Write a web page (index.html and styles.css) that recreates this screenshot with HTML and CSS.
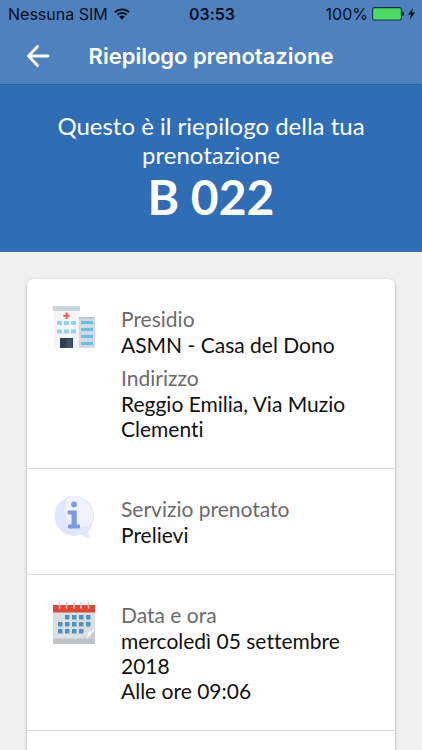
FILE: index.html
```html
<!DOCTYPE html>
<html lang="it">
<head>
<meta charset="utf-8">
<meta name="viewport" content="width=device-width, initial-scale=1">
<title>Riepilogo prenotazione</title>
<link rel="stylesheet" href="styles.css">
</head>
<body>
<header class="top">
  <div class="status">
    <div class="carrier">
      <span>Nessuna SIM</span>
      <svg class="wifi" viewBox="0 0 16 12" aria-hidden="true">
        <path d="M1 4.2a10 10 0 0 1 14 0M3.4 6.8a6.5 6.5 0 0 1 9.2 0" fill="none" stroke="currentColor" stroke-width="1.9"/>
        <path d="M5.2 8.8a4 4 0 0 1 5.6 0L8 11.7z" fill="currentColor"/>
      </svg>
    </div>
    <time class="clock">03:53</time>
    <div class="power">
      <span>100%</span>
      <svg class="battery" viewBox="0 0 44 14" aria-hidden="true">
        <rect x=".6" y=".6" width="28.8" height="12.4" rx="1.8" fill="#4cd964" stroke="#16324f" stroke-width="1.1"/>
        <path d="M30.5 4.5c2 .4 2 4.300 0 4.700z" fill="#06101c"/>
        <path d="M41 1l-5 6.600h3L37.700 12.500l5.400-6.900h-3.200z" fill="#06101c"/>
      </svg>
    </div>
  </div>
  <nav class="bar">
    <button class="back" type="button" aria-label="Indietro">
      <svg viewBox="0 0 24 22" aria-hidden="true"><path d="M11.500 1.500L2.500 11l9 9.500M2.500 11H22" fill="none" stroke="currentColor" stroke-width="2.800" stroke-linejoin="round" stroke-linecap="round"/></svg>
    </button>
    <h1 class="title">Riepilogo prenotazione</h1>
  </nav>
</header>
<main class="content">
  <section class="hero">
    <p class="intro">Questo è il riepilogo della tua prenotazione</p>
    <strong class="code">B 022</strong>
  </section>
  <section class="card">
    <div class="row">
      <svg class="icon" viewBox="0 0 42 42" aria-hidden="true">
        <path d="M1 3h25v39H1z" fill="#f3f4f6"/>
        <path d="M0 0h27v5H0z" fill="#cdd3dc"/>
        <path d="M26 11h16v31H26z" fill="#d3d9e2"/>
        <path d="M26 11h16v2H26z" fill="#bdc7d3"/>
        <path d="M12.500 6.500h2v2.200h2.200v2h-2.200V13h-2v-2.300h-2.200v-2h2.200z" fill="#f2624b"/>
        <path d="M4 15h5v4H4zM11 15h5v4h-5zM18 15h5v4h-5zM4 23.500h5v4H4zM11 23.500h5v4h-5zM18 23.500h5v4h-5z" fill="#8fd3f3"/>
        <path d="M28 15h12v3H28zM28 22h12v3H28zM28 29h12v3H28zM28 36h12v3H28z" fill="#67bfe6"/>
        <path d="M7 32h13v10H7z" fill="#2d3f52"/><path d="M13.500 33H19v9h-5.500z" fill="#405268"/>
      </svg>
      <dl class="details">
        <div class="group"><dt>Presidio</dt><dd>ASMN - Casa del Dono</dd></div>
        <div class="group"><dt>Indirizzo</dt><dd>Reggio Emilia, Via Muzio Clementi</dd></div>
      </dl>
    </div>
    <div class="row">
      <svg class="icon" viewBox="0 0 42 42" aria-hidden="true">
        <path d="M20.500 0a20 20 0 1 0 8.500 38.500c2 2.500 4.500 3.500 6.800 3.300.8-.1 1-.8.600-1.400-1-1.800-1.300-3.600-.9-6.100A20.200 20.200 0 0 0 20.500 0z" fill="#dfe6fd"/>
        <path d="M20.500 0c-6 2-9 7-8.500 13.500C12.500 23 19.500 31 28.500 31c4.500 0 8-1.500 10.500-4.500A20.200 20.200 0 0 0 20.500 0z" fill="#f0f3ff"/>
        <circle cx="21" cy="8.500" r="2.900" fill="#7b9be0"/>
        <path d="M15.500 14.500h8.300v14h2.200q1 0 1 1v2q0 1-1 1H16q-1 0-1-1v-2q0-1 1-1h2.500v-10h-3q-1 0-1-1v-2q0-1 1-1z" fill="#7b9be0"/>
      </svg>
      <dl class="details">
        <div class="group"><dt>Servizio prenotato</dt><dd>Prelievi</dd></div>
      </dl>
    </div>
    <div class="row">
      <svg class="icon" viewBox="0 0 42 42" aria-hidden="true">
        <path d="M0 9h42v33H0z" fill="#dcdfe1"/><path d="M0 36.500h42V42H0z" fill="#bfc3c6"/>
        <path d="M0 3h42v7.500H0z" fill="#dc4938"/>
        <path d="M6.500 0v6M13.500 0v6M21 0v6M28 0v6M35.500 0v6" stroke="#e2c7c5" stroke-width="1.500" stroke-linecap="round"/>
        <path d="M12 13h4.500v4.500H12zM19 13h4.500v4.500H19zM26 13h4.500v4.500H26zM33 13h4.500v4.500H33zM5 20h4.500v4.500H5zM12 20h4.500v4.500H12zM19 20h4.500v4.500H19zM26 20h4.500v4.500H26zM33 20h4.500v4.500H33zM5 27h4.500v4.500H5zM12 27h4.500v4.500H12zM19 27h4.500v4.500H19zM26 27h4.500v4.500H26z" fill="#4c92c4"/>
        <path d="M42 28v8.500h-8z" fill="#c9cdd0"/><path d="M34 36.500l1-6 7-2.500z" fill="#fafbfc"/>
      </svg>
      <dl class="details">
        <div class="group"><dt>Data e ora</dt><dd>mercoledì 05 settembre 2018</dd><dd>Alle ore 09:06</dd></div>
      </dl>
    </div>
    <div class="row"></div>
  </section>
</main>
</body>
</html>
```
FILE: styles.css
```css
* {
  box-sizing: border-box;
}

body {
  display: flex;
  flex-direction: column;
  height: 100vh;
  margin: 0;
  background: #efefef;
  color: #111;
  font-family: Lato, sans-serif;
  font-variant-ligatures: none;
}

.top {
  flex: none;
  background: #4e81bd;
  border-bottom: 1px solid #2c66a5;
  font-family: Inter, sans-serif;
}

.status {
  display: grid;
  grid-template-columns: 1fr auto 1fr;
  align-items: center;
  height: 28px;
  padding: 0 6px 0 8px;
  color: #06101c;
  font-size: 16px;
  line-height: 20px;
}

.carrier,
.power {
  display: flex;
  align-items: center;
  gap: 6px;
}

.power {
  justify-content: flex-end;
  gap: 4px;
}

.wifi {
  width: 16px;
  height: 12px;
}

.battery {
  width: 44px;
  height: 14px;
}

.clock {
  font-weight: 600;
}

.bar {
  display: grid;
  grid-template-columns: 44px 1fr 44px;
  align-items: center;
  height: 56px;
  padding: 0 16px;
  color: #fff;
}

.back {
  display: flex;
  align-items: center;
  height: 44px;
  padding: 0 10px;
  border: 0;
  background: none;
  color: inherit;
}

.back svg {
  width: 24px;
  height: 22px;
}

.title {
  margin: 0;
  font-size: 22px;
  font-weight: 600;
  line-height: 28px;
  text-align: center;
  white-space: nowrap;
}

.content {
  flex: 1;
  min-height: 0;
  overflow-y: auto;
  scrollbar-width: none;
}

.hero {
  padding: 26px 48px 27px;
  background: #2f6db5;
  color: #fff;
  text-align: center;
}

.intro {
  margin: 0;
  font-size: 24px;
  line-height: 29px;
}

.code {
  display: block;
  font-size: 48px;
  line-height: 56px;
}

.card {
  margin: 27px;
  border-radius: 6px;
  background: #fff;
  box-shadow: 0 1px 3px rgba(0, 0, 0, 0.3);
}

.row {
  display: flex;
  align-items: flex-start;
  gap: 26px;
  min-height: 80px;
  padding: 27px 26px;
  border-bottom: 1px solid #dcdcdc;
}

.row:last-child {
  border-bottom: 0;
}

.icon {
  flex: none;
  width: 42px;
  height: 42px;
}

.details {
  display: grid;
  flex: 1;
  gap: 8px;
  margin: 0;
  font-size: 21px;
  line-height: 25px;
}

.details dt {
  color: #6b6b6b;
  line-height: 26px;
}

.details dd {
  margin: 0;
}
```
